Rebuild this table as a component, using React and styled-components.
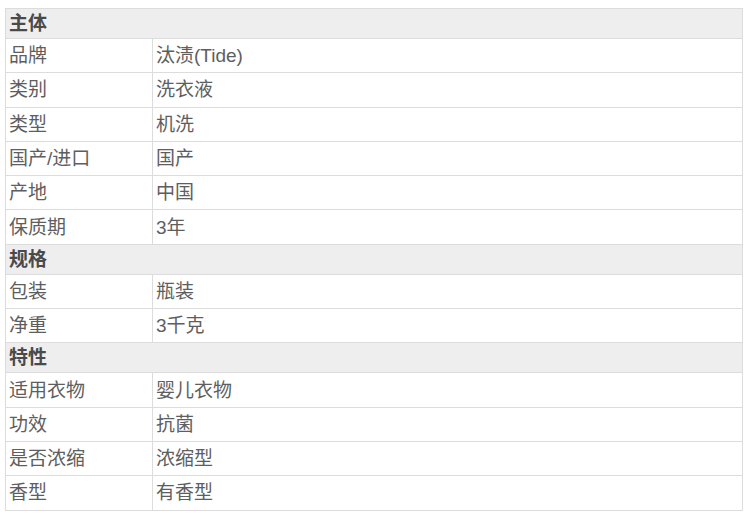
import React from "react";
import styled, { createGlobalStyle } from "styled-components";

const GlobalStyle = createGlobalStyle`
  html, body {
    margin: 0;
    padding: 0;
    background: #ffffff;
  }
  body {
    font-family: "Liberation Sans", "Noto Sans CJK SC", sans-serif;
  }
`;

const Page = styled.div`
  padding: 8px 7px 0 5px;
`;

const Table = styled.table`
  width: 738px;
  border-collapse: collapse;
  border: 1px solid #dcdcdc;
  table-layout: fixed;
  font-size: 19px;
  color: #5e5e5e;
`;

const GroupCell = styled.th`
  height: 29px;
  padding: 0 0 0 3px;
  text-align: left;
  font-weight: bold;
  color: #4a4a4a;
  background: #eeeeee;
  border: 1px solid #dcdcdc;
  line-height: 29px;
`;

const LabelCell = styled.td`
  height: 32.3px;
  padding: 1px 0 0 3px;
  border: 1px solid #dcdcdc;
  vertical-align: middle;
  line-height: 24px;
`;

const ValueCell = styled.td`
  height: 32.3px;
  padding: 1px 0 0 3px;
  border: 1px solid #dcdcdc;
  vertical-align: middle;
  line-height: 24px;
`;

const groups = [
  {
    title: "主体",
    rows: [
      ["品牌", "汰渍(Tide)"],
      ["类别", "洗衣液"],
      ["类型", "机洗"],
      ["国产/进口", "国产"],
      ["产地", "中国"],
      ["保质期", "3年"],
    ],
  },
  {
    title: "规格",
    rows: [
      ["包装", "瓶装"],
      ["净重", "3千克"],
    ],
  },
  {
    title: "特性",
    rows: [
      ["适用衣物", "婴儿衣物"],
      ["功效", "抗菌"],
      ["是否浓缩", "浓缩型"],
      ["香型", "有香型"],
    ],
  },
];

export default function App() {
  return (
    <>
      <GlobalStyle />
      <Page>
        <Table>
          <colgroup>
            <col style={{ width: 147 }} />
            <col />
          </colgroup>
          <tbody>
            {groups.map((g) => (
              <React.Fragment key={g.title}>
                <tr>
                  <GroupCell colSpan={2}>{g.title}</GroupCell>
                </tr>
                {g.rows.map(([k, v]) => (
                  <tr key={k}>
                    <LabelCell>{k}</LabelCell>
                    <ValueCell>{v}</ValueCell>
                  </tr>
                ))}
              </React.Fragment>
            ))}
          </tbody>
        </Table>
      </Page>
    </>
  );
}
